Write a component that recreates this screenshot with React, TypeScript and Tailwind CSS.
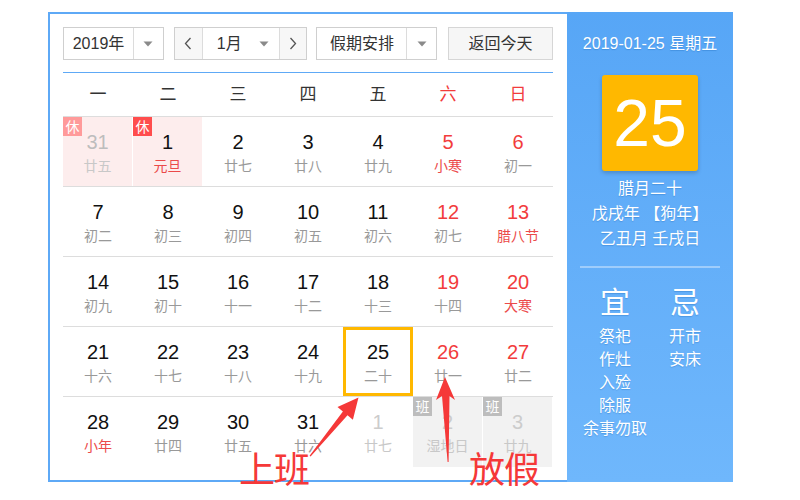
import React from "react";

type Cell = {
  d: string;
  l: string;
  red?: boolean;
  lred?: boolean;
  other?: boolean;
  xiu?: boolean;
  ban?: boolean;
  today?: boolean;
};

const rows: Cell[][] = [
  [
    { d: "31", l: "廿五", other: true, xiu: true },
    { d: "1", l: "元旦", lred: true, xiu: true },
    { d: "2", l: "廿七" },
    { d: "3", l: "廿八" },
    { d: "4", l: "廿九" },
    { d: "5", l: "小寒", red: true, lred: true },
    { d: "6", l: "初一", red: true },
  ],
  [
    { d: "7", l: "初二" },
    { d: "8", l: "初三" },
    { d: "9", l: "初四" },
    { d: "10", l: "初五" },
    { d: "11", l: "初六" },
    { d: "12", l: "初七", red: true },
    { d: "13", l: "腊八节", red: true, lred: true },
  ],
  [
    { d: "14", l: "初九" },
    { d: "15", l: "初十" },
    { d: "16", l: "十一" },
    { d: "17", l: "十二" },
    { d: "18", l: "十三" },
    { d: "19", l: "十四", red: true },
    { d: "20", l: "大寒", red: true, lred: true },
  ],
  [
    { d: "21", l: "十六" },
    { d: "22", l: "十七" },
    { d: "23", l: "十八" },
    { d: "24", l: "十九" },
    { d: "25", l: "二十", today: true },
    { d: "26", l: "廿一", red: true },
    { d: "27", l: "廿二", red: true },
  ],
  [
    { d: "28", l: "小年", lred: true },
    { d: "29", l: "廿四" },
    { d: "30", l: "廿五" },
    { d: "31", l: "廿六" },
    { d: "1", l: "廿七", other: true },
    { d: "2", l: "湿地日", other: true, ban: true },
    { d: "3", l: "廿九", other: true, ban: true },
  ],
];

const weekdays = ["一", "二", "三", "四", "五", "六", "日"];

function Tri() {
  return (
    <svg width="10" height="6" viewBox="0 0 10 6">
      <path d="M0.5 0.5 L9.5 0.5 L5 5.5 Z" fill="#8a8a8a" />
    </svg>
  );
}

function Chevron({ dir }: { dir: "l" | "r" }) {
  return (
    <svg width="8" height="13" viewBox="0 0 8 13">
      {dir === "l" ? (
        <path d="M6.5 1 L1.5 6.5 L6.5 12" fill="none" stroke="#555" strokeWidth="1.3" />
      ) : (
        <path d="M1.5 1 L6.5 6.5 L1.5 12" fill="none" stroke="#555" strokeWidth="1.3" />
      )}
    </svg>
  );
}

function DayCell({ c }: { c: Cell }) {
  let bg = "";
  if (c.xiu) bg = "bg-[#fdeded]";
  if (c.ban) bg = "bg-[#f2f2f2]";
  let numColor = "text-[#111]";
  if (c.red) numColor = "text-[#f23c3c]";
  if (c.other) numColor = c.xiu ? "text-[#bdbdbd]" : "text-[#cccccc]";
  let lunarColor = "text-[#999]";
  if (c.lred) lunarColor = "text-[#eb4a4a]";
  if (c.other) lunarColor = "text-[#c8c8c8]";
  return (
    <div className={`relative h-full flex flex-col items-center ${bg} ${c.xiu || c.ban ? "mr-[1px]" : ""}`}>
      {c.xiu && (
        <div
          className={`absolute left-0 top-0 w-[19px] h-[19px] flex items-center justify-center text-[14px] leading-none text-white ${
            c.other ? "bg-[#ff9a9a]" : "bg-[#ff4d4d]"
          }`}
        >
          休
        </div>
      )}
      {c.ban && (
        <div className="absolute left-0 top-0 w-[19px] h-[19px] flex items-center justify-center text-[14px] leading-none text-white bg-[#bdbdbd]">
          班
        </div>
      )}
      {c.today && <div className="absolute inset-0 border-[3px] border-[#ffb800]" />}
      <div className={`pt-[13px] text-[20px] leading-[24px] ${numColor}`}>{c.d}</div>
      <div className={`mt-[2px] text-[14px] leading-[20px] ${lunarColor}`}>{c.l}</div>
    </div>
  );
}

export default function App() {
  return (
    <div
      className="relative w-[800px] h-[500px] bg-white overflow-hidden"
      style={{ fontFamily: '"Liberation Sans", "Noto Sans CJK SC", sans-serif' }}
    >
      <div className="ml-[48px] mt-[12px] w-[685px] h-[470px] flex border-y-2 border-l-2 border-[#5ea9f6]">
        {/* left panel */}
        <div className="w-[517px] pl-[13px] pr-[14px]">
          <div className="mt-[13px] flex h-[33px] text-[16px] text-[#333]">
            <div className="flex w-[101px] border border-[#cfcfcf] bg-white">
              <div className="w-[70px] flex items-center justify-center border-r border-[#dcdcdc]">2019年</div>
              <div className="flex-1 flex items-center justify-center">
                <Tri />
              </div>
            </div>
            <div className="ml-[10px] flex w-[134px] border border-[#cfcfcf] bg-white">
              <div className="w-[28px] flex items-center justify-center border-r border-[#dcdcdc] bg-[#f7f7f7]">
                <Chevron dir="l" />
              </div>
              <div className="flex-1 flex items-center justify-between pl-[14px] pr-[10px]">
                <span>1月</span>
                <Tri />
              </div>
              <div className="w-[27px] flex items-center justify-center border-l border-[#dcdcdc] bg-[#f7f7f7]">
                <Chevron dir="r" />
              </div>
            </div>
            <div className="ml-[9px] flex w-[121px] border border-[#cfcfcf] bg-white">
              <div className="w-[90px] flex items-center justify-center border-r border-[#dcdcdc]">假期安排</div>
              <div className="flex-1 flex items-center justify-center">
                <Tri />
              </div>
            </div>
            <div className="ml-[11px] w-[105px] flex items-center justify-center border border-[#d6d6d6] bg-[#f6f6f6]">
              返回今天
            </div>
          </div>
          <div className="mt-[12px] h-[1px] bg-[#5ea9f6]" />
          <div className="grid grid-cols-7 h-[44px] border-b border-[#dddddd] text-[17px]">
            {weekdays.map((w, i) => (
              <div
                key={w}
                className={`flex items-center justify-center pt-[1px] ${i >= 5 ? "text-[#f23c3c]" : "text-[#333]"}`}
              >
                {w}
              </div>
            ))}
          </div>
          {rows.map((r, ri) => (
            <div
              key={ri}
              className={`grid grid-cols-7 h-[70px] ${ri < rows.length - 1 ? "border-b border-[#dddddd]" : ""}`}
            >
              {r.map((c, ci) => (
                <DayCell key={ci} c={c} />
              ))}
            </div>
          ))}
        </div>
        {/* right panel */}
        <div
          className="w-[166px] -mt-[2px] -mb-[2px] flex flex-col items-center text-white bg-gradient-to-b from-[#57a6f6] to-[#6fb7fc]"
          style={{ textShadow: "0 1px 1px rgba(0,80,160,0.25)" }}
        >
          <div className="mt-[20px] text-[16px] leading-[24px]">2019-01-25 星期五</div>
          <div
            className="mt-[19px] w-[96px] h-[96px] rounded-[3px] bg-[#ffb800] shadow-[0_2px_4px_rgba(0,0,0,0.2)] flex items-center justify-center text-[66px] leading-none"
            style={{ textShadow: "none" }}
          >
            25
          </div>
          <div className="mt-[5px] text-[16px] leading-[25px] text-center">
            <div>腊月二十</div>
            <div>戊戌年 【狗年】</div>
            <div>乙丑月 壬戌日</div>
          </div>
          <div className="mt-[15px] w-[140px] h-[2px] bg-[#9fcdfb]" />
          <div className="mt-[17px] grid grid-cols-2 w-[140px]">
            <div className="flex flex-col items-center">
              <div className="text-[30px] leading-[36px]">宜</div>
              <div className="mt-[4px] text-[16px] leading-[23px] text-center whitespace-nowrap">
                <div>祭祀</div>
                <div>作灶</div>
                <div>入殓</div>
                <div>除服</div>
                <div>余事勿取</div>
              </div>
            </div>
            <div className="flex flex-col items-center">
              <div className="text-[30px] leading-[36px]">忌</div>
              <div className="mt-[4px] text-[16px] leading-[23px] text-center">
                <div>开市</div>
                <div>安床</div>
              </div>
            </div>
          </div>
        </div>
      </div>

      {/* annotations */}
      <svg className="absolute left-0 top-0 pointer-events-none" width="800" height="500" viewBox="0 0 800 500">
        <polygon
          points="358.5,397.5 352.9,419.8 347.5,415.3 310.6,456.5 309.6,455.7 342.9,411.5 337.5,407"
          fill="#f53838"
        />
        <polygon
          points="445,377 455,400 449.5,396 448.6,462 447.6,462 442,396 436,400"
          fill="#f53838"
        />
      </svg>
      <div
        className="absolute left-[239px] top-[449px] text-[36px] leading-none text-[#f53838] tracking-[-1px]"
        style={{ fontFamily: '"Noto Sans CJK SC", sans-serif' }}
      >
        上班
      </div>
      <div
        className="absolute left-[469px] top-[449px] text-[36px] leading-none text-[#f53838] tracking-[-1px]"
        style={{ fontFamily: '"Noto Sans CJK SC", sans-serif' }}
      >
        放假
      </div>
    </div>
  );
}
